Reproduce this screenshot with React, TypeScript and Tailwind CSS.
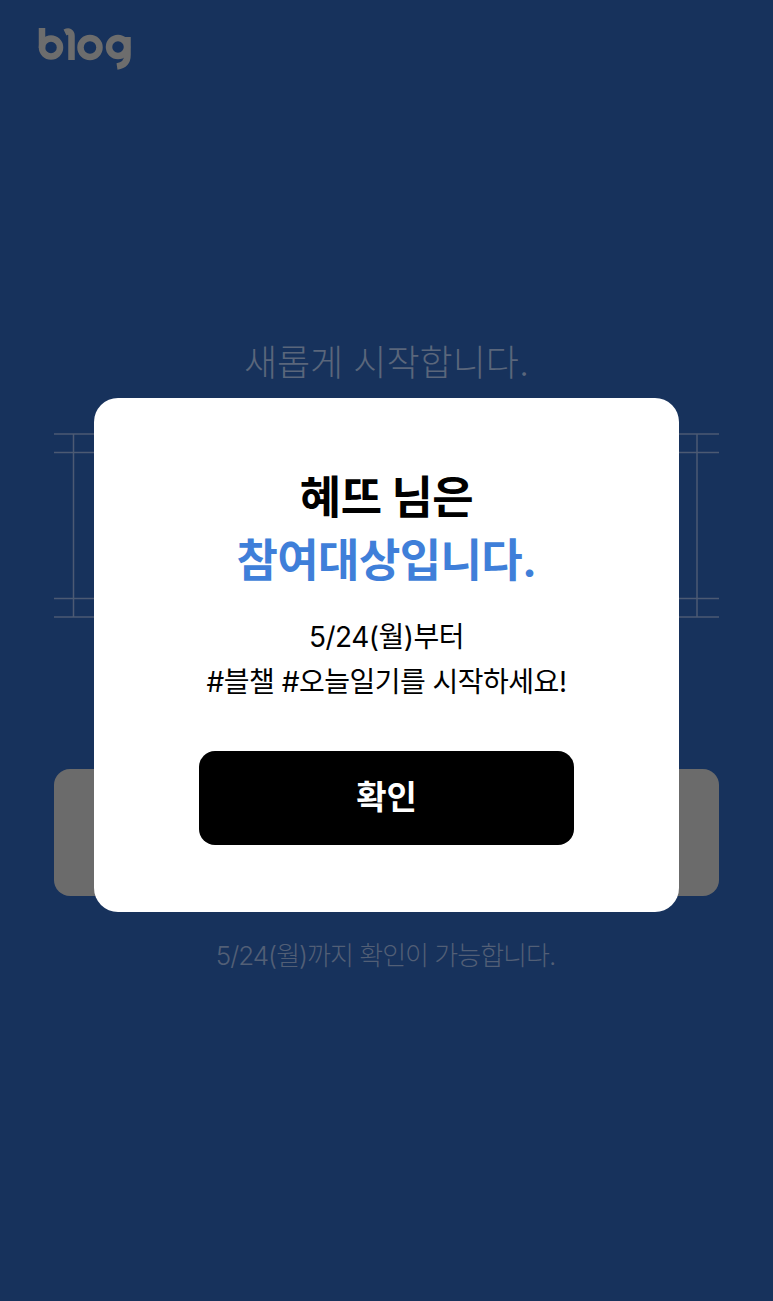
const FONT = "font-['Inter','Noto_Sans_CJK_KR',sans-serif]";

function BlogLogo() {
  return (
    <svg width="94" height="43" viewBox="0 0 94 43" fill="none" stroke="#6d6d6d" strokeWidth="6.5">
      <path d="M4 1V21" />
      <circle cx="13" cy="20.5" r="9" />
      <path d="M27 5.5C31 3.5 33.5 5 33.5 9V33" />
      <circle cx="52" cy="20.5" r="9.5" />
      <circle cx="80" cy="20" r="9" />
      <path d="M89.5 10V28C89.5 35 85.5 38.5 79 39.5" />
    </svg>
  );
}

function Frame() {
  return (
    <svg width="665" height="185" viewBox="0 0 665 185" fill="none" stroke="#4c5a73" strokeWidth="1.5" className="mt-[45px]">
      <path d="M0 1H665M0 19.5H665M0 165.5H665M0 184H665M19.5 1V184M643 1V184" />
    </svg>
  );
}

export default function App() {
  return (
    <div className={`relative h-[1301px] w-[773px] overflow-hidden bg-[#17325c] ${FONT}`}>
      <div className="px-[38px] pt-[27px]">
        <BlogLogo />
      </div>

      <div className="flex flex-col items-center px-[54px] pt-[268px]">
        <h1 className="text-[36px] leading-[50px] font-light text-[#5a667b]">새롭게 시작합니다.</h1>
        <Frame />
        <div className="mt-[151px] h-[127px] w-full rounded-[16px] bg-[#6b6b6b]" />
        <p className="mt-[42px] -translate-x-[1px] text-[26px] leading-[36px] font-light tracking-[-1px] text-[#525f76]">5/24(월)까지 확인이 가능합니다.</p>
      </div>

      <div className="absolute top-[398px] left-[94px] flex h-[514px] w-[585px] flex-col items-center rounded-[24px] bg-white pt-[68px]">
        <h2 className="text-[45px] leading-[63px] font-bold tracking-[-0.6px] text-black">혜뜨 님은</h2>
        <p className="text-[45px] leading-[63px] font-bold tracking-[-0.6px] text-[#3f7fd9]">참여대상입니다.</p>
        <div className="mt-[23px] text-center text-[28px] leading-[45px] tracking-[-0.5px] text-black">
          <p>5/24(월)부터</p>
          <p>#블챌 #오늘일기를 시작하세요!</p>
        </div>
        <button className="mt-[46px] h-[94px] w-[375px] rounded-[16px] bg-black text-[33px] font-bold text-white">확인</button>
      </div>
    </div>
  );
}
